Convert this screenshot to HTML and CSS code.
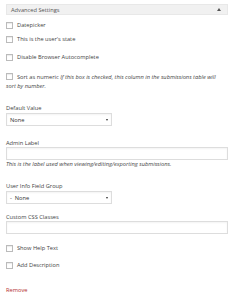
FILE: index.html
```html
<!DOCTYPE html>
<html lang="en">

<head>
  <meta charset="UTF-8">
  <title>Advanced Settings</title>
  <link rel="stylesheet" href="styles.css">
</head>

<body>
  <div class="panel">
    <div class="head">
      <span>Advanced Settings</span>
      <span class="caret"></span>
    </div>

    <label class="check first"><span class="box"></span>Datepicker</label>
    <label class="check"><span class="box"></span>This is the user's state</label>
    <label class="check gap-lg"><span class="box"></span>Disable Browser Autocomplete</label>

    <div class="sort">
      <span class="box"></span>Sort as numeric <em>If this box is checked, this column in the submissions table will sort by number.</em>
    </div>

    <div class="field f-default">
      <div class="label">Default Value</div>
      <div class="select half"><span>None</span><span class="arrow"></span></div>
    </div>

    <div class="field f-admin">
      <div class="label">Admin Label</div>
      <div class="input"></div>
      <div class="help">This is the label used when viewing/editing/exporting submissions.</div>
    </div>

    <div class="field f-group">
      <div class="label">User Info Field Group</div>
      <div class="select half"><span>- &nbsp;None</span><span class="arrow"></span></div>
    </div>

    <div class="field f-css">
      <div class="label">Custom CSS Classes</div>
      <div class="input"></div>
    </div>

    <label class="check f-help"><span class="box"></span>Show Help Text</label>
    <label class="check f-desc"><span class="box"></span>Add Description</label>

    <a class="remove" href="#">Remove</a>
  </div>
</body>

</html>
```

FILE: styles.css
```css
body {
  margin: 0;
  background: #fff;
  font-family: "Open Sans", "Liberation Sans", sans-serif;
  font-size: 5.7px;
  color: #444;
}

.panel {
  padding: 4px 5px 0 6px;
}

.head {
  height: 11px;
  background: #f1f1f1;
  border: 1px solid #e8e8e8;
  box-sizing: border-box;
  display: flex;
  align-items: center;
  justify-content: space-between;
  padding: 0 6px 0 4px;
  color: #555;
}

.caret {
  width: 0;
  height: 0;
  border-left: 2px solid transparent;
  border-right: 2px solid transparent;
  border-bottom: 3px solid #555;
}

.check {
  display: flex;
  align-items: center;
  height: 8px;
  margin-top: 6px;
}

.check.first {
  margin-top: 6px;
}

.check.gap-lg {
  margin-top: 10px;
}

.box {
  display: inline-block;
  width: 5px;
  height: 5px;
  border: 1px solid #bbb;
  box-shadow: inset 0 1px 1px rgba(0, 0, 0, 0.08);
  margin-right: 4px;
  flex: none;
}

.sort {
  margin-top: 12px;
  line-height: 9px;
  padding-right: 6px;
}

.sort .box {
  vertical-align: -1px;
}

.sort em {
  font-style: italic;
}

.label {
  height: 8px;
  line-height: 8px;
}

.f-default {
  margin-top: 13px;
}

.f-admin {
  margin-top: 13px;
}

.f-group {
  margin-top: 14px;
}

.f-css {
  margin-top: 9px;
}

.select {
  margin-top: 1px;
  height: 13px;
  border: 1px solid #ddd;
  box-sizing: border-box;
  box-shadow: inset 0 1px 2px rgba(0, 0, 0, 0.05);
  display: flex;
  align-items: center;
  justify-content: space-between;
  padding: 0 3px;
  color: #333;
}

.select.half {
  width: 106px;
}

.arrow {
  width: 0;
  height: 0;
  border-left: 1.5px solid transparent;
  border-right: 1.5px solid transparent;
  border-top: 2.5px solid #333;
}

.input {
  height: 13px;
  border: 1px solid #ddd;
  box-sizing: border-box;
  box-shadow: inset 0 1px 2px rgba(0, 0, 0, 0.05);
}

.help {
  font-style: italic;
  line-height: 8px;
}

.f-help {
  margin-top: 10px;
}

.f-desc {
  margin-top: 9px;
}

.remove {
  display: block;
  margin-top: 17px;
  line-height: 8px;
  color: #b32d2e;
  text-decoration: none;
}
```
